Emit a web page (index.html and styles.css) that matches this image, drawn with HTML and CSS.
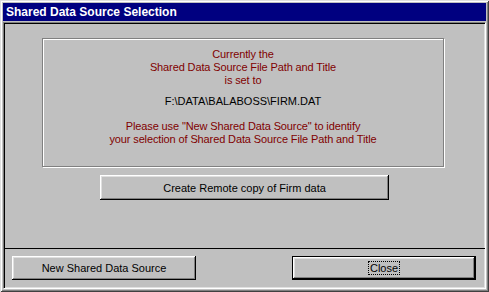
FILE: index.html
```html
<!DOCTYPE html>
<html lang="en">
<head>
    <meta charset="UTF-8">
    <title>Shared Data Source Selection</title>
    <link rel="stylesheet" href="styles.css">
</head>
<body>
    <div class="window">
        <div class="titlebar">Shared Data Source Selection</div>
        <div class="client">
            <div class="main">
                <div class="group">
                    <p class="msg">Currently the<br>Shared Data Source File Path and Title<br>is set to</p>
                    <p class="path">F:\DATA\BALABOSS\FIRM.DAT</p>
                    <p class="msg msg-bottom">Please use "New Shared Data Source" to identify<br>your selection of Shared Data Source File Path and Title</p>
                </div>
                <button class="btn btn-remote">Create Remote copy of Firm data</button>
            </div>
            <div class="footer">
                <button class="btn btn-new">New Shared Data Source</button>
                <button class="btn btn-default btn-close"><span class="focus">Close</span></button>
            </div>
        </div>
    </div>
</body>
</html>
```

FILE: styles.css
```css
body {
    margin: 0;
    background: #c0c0c0;
    font-family: 'Liberation Sans', Arial, sans-serif;
    font-size: 11px;
}
.window {
    width: 489px;
    height: 292px;
    box-sizing: border-box;
    padding: 3px;
    display: flex;
    flex-direction: column;
    background: #c0c0c0;
    box-shadow: inset 1px 1px #dfdfdf, inset -1px -1px #404040, inset 2px 2px #fff, inset -2px -2px #808080;
}
.titlebar {
    height: 18px;
    line-height: 18px;
    padding-left: 3px;
    margin-bottom: 1px;
    background: #000080;
    color: #fff;
    font-weight: bold;
    font-size: 12px;
}
.client {
    flex: 1;
    display: flex;
    flex-direction: column;
    border: 1px solid;
    border-color: #808080 #fff #fff #808080;
    box-shadow: inset 1px 1px #000, inset -1px -1px #dfdfdf;
}
.main {
    flex: 1;
    display: flex;
    flex-direction: column;
    align-items: flex-start;
}
.group {
    width: 402px;
    height: 129px;
    box-sizing: border-box;
    margin: 15px 0 0 38px;
    padding-top: 9px;
    border: 1px solid #808080;
    box-shadow: inset 1px 1px #fff, 1px 1px #fff;
    text-align: center;
}
.group p {
    margin: 0;
    line-height: 13px;
}
.msg {
    color: #800000;
    letter-spacing: -0.12px;
}
.path {
    margin-top: 8px !important;
    color: #000;
}
.msg-bottom {
    margin-top: 12px !important;
}
.btn {
    font-family: inherit;
    font-size: 11px;
    color: #000;
    background: #c0c0c0;
    border: none;
    padding: 0;
    box-shadow: inset -1px -1px #000, inset 1px 1px #fff, inset -2px -2px #808080, inset 2px 2px #dfdfdf;
}
.btn-remote {
    width: 289px;
    height: 25px;
    margin: 8px 0 0 96px;
}
.footer {
    height: 40px;
    box-sizing: border-box;
    border-top: 1px solid #000;
    padding: 7px 0 0 8px;
    display: flex;
    gap: 96px;
    align-items: flex-start;
}
.btn-new,
.btn-close {
    width: 184px;
    height: 24px;
}
.btn-default {
    border: 1px solid #000;
}
.focus {
    border: 1px dotted #000;
    padding: 0 1px;
}
```
